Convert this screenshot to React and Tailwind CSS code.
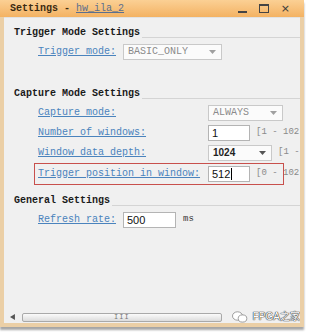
const mono = { fontFamily: '"Liberation Mono", "DejaVu Sans Mono", monospace' };

function Header({ children }) {
  return (
    <div className="flex h-[14px] items-end pl-[10px]">
      <span className="text-[10px] font-bold leading-[14px] text-[#1a1a1a]" style={mono}>
        {children}
      </span>
      <div className="mb-[2px] ml-[2px] h-px flex-1 bg-[#d4d4d4]" />
    </div>
  );
}

function Label({ children, w }) {
  return (
    <span
      className={`shrink-0 text-[10px] leading-[14px] text-[#4a83bd] underline ${w}`}
      style={mono}
    >
      {children}
    </span>
  );
}

function Combo({ value, w, dim }) {
  return (
    <div
      className={`flex h-[16px] shrink-0 items-center justify-between border border-[#c9c9c9] bg-[#fbfbfb] pl-[4px] pr-[5px] ${w}`}
    >
      <span
        className={`text-[10px] leading-none ${dim ? 'text-[#8a8a8a]' : 'font-bold text-[#222]'}`}
        style={dim ? mono : { fontFamily: '"Liberation Sans", Arial, sans-serif' }}
      >
        {value}
      </span>
      <svg width="7" height="4" viewBox="0 0 7 4">
        <path d="M0 0h7L3.5 4z" fill={dim ? '#a0a0a0' : '#555'} />
      </svg>
    </div>
  );
}

function Field({ value, w, cursor }) {
  return (
    <div className={`flex h-[16px] shrink-0 items-center border border-[#b4b4b4] bg-white pl-[3px] ${w}`}>
      <span
        className="text-[11px] leading-none text-[#111]"
        style={{ fontFamily: '"Liberation Sans", Arial, sans-serif' }}
      >
        {value}
      </span>
      {cursor && <span className="ml-px h-[12px] w-px bg-black" />}
    </div>
  );
}

function Range({ children }) {
  return (
    <span className="ml-[6px] shrink-0 whitespace-nowrap text-[9px] text-[#8a8a8a]" style={mono}>
      {children}
    </span>
  );
}

export default function App() {
  return (
    <div className="h-[334px] w-[310px] overflow-hidden bg-white">
      <div className="flex h-[327px] w-[304px] flex-col border-x-4 border-b-4 border-[#ebcfa6] bg-[#f0f0f0] shadow-[0_3px_2px_rgba(0,0,0,0.35)]">
        {/* title bar */}
        <div className="-mx-[4px] flex h-[17px] shrink-0 items-center bg-gradient-to-b from-[#fbd094] to-[#f3b262] pl-[10px] pr-[14px]">
          <span className="text-[10px] font-bold text-[#3a2a12]" style={mono}>
            Settings - <span className="font-normal text-[#5a6f8f] underline">hw_ila_2</span>
          </span>
          <div className="ml-auto flex items-center gap-[12px] text-[#3a3a3a]">
            <div className="mt-[6px] h-[2px] w-[9px] bg-[#444]" />
            <div className="h-[9px] w-[10px] border-[1.5px] border-t-2 border-[#444]" />
            <span className="text-[11px] leading-none" style={{ fontFamily: '"DejaVu Sans", sans-serif' }}>
              ×
            </span>
          </div>
        </div>

        <div className="flex min-h-0 flex-1 flex-col overflow-hidden border-t border-[#e2e2e2] pt-[8px]">
          <Header>Trigger Mode Settings</Header>
          <div className="mt-[2px] flex h-[20px] items-center pl-[34px]">
            <Label w="w-[85px]">Trigger mode:</Label>
            <Combo value="BASIC_ONLY" w="w-[99px]" dim />
          </div>

          <div className="mt-[25px]">
            <Header>Capture Mode Settings</Header>
          </div>
          <div className="mt-[2px] flex h-[20px] items-center pl-[34px]">
            <Label w="w-[170px]">Capture mode:</Label>
            <Combo value="ALWAYS" w="w-[75px]" dim />
          </div>
          <div className="flex h-[20px] items-center pl-[34px]">
            <Label w="w-[170px]">Number of windows:</Label>
            <Field value="1" w="w-[42px]" />
            <Range>[1 - 102</Range>
          </div>
          <div className="flex h-[20px] items-center pl-[34px]">
            <Label w="w-[170px]">Window data depth:</Label>
            <Combo value="1024" w="w-[64px]" />
            <Range>[1 -</Range>
          </div>
          <div className="relative flex h-[22px] items-center pl-[34px]">
            <Label w="w-[170px]">Trigger position in window:</Label>
            <Field value="512" w="w-[42px]" cursor />
            <Range>[0 - 102</Range>
            <div className="pointer-events-none absolute inset-y-0 left-[30px] w-[250px] border border-[#c8504c]" />
          </div>

          <div className="mt-[9px]">
            <Header>General Settings</Header>
          </div>
          <div className="mt-[2px] flex h-[20px] items-center pl-[34px]">
            <Label w="w-[85px]">Refresh rate:</Label>
            <Field value="500" w="w-[53px]" />
            <span className="ml-[7px] text-[9px] text-[#333]" style={mono}>
              ms
            </span>
          </div>

          <div className="flex-1" />

          {/* horizontal scrollbar */}
          <div className="mb-[1px] flex h-[10px] shrink-0 items-center pl-[6px]">
            <svg width="5" height="6" viewBox="0 0 5 6">
              <path d="M0 3L5 0v6z" fill="#555" />
            </svg>
            <div className="ml-[7px] flex h-[9px] w-[202px] items-center justify-center rounded-[2px] border border-[#a9a9a9] bg-gradient-to-b from-[#fbfbfb] to-[#dcdcdc]">
              <span className="text-[7px] leading-none tracking-[1px] text-[#777]" style={mono}>
                III
              </span>
            </div>
            <div className="ml-[10px] flex items-center gap-[5px]">
              <svg width="16" height="12" viewBox="0 0 16 12">
                <ellipse cx="5.5" cy="5" rx="5" ry="4.2" fill="#fff" stroke="#888" strokeWidth="0.8" />
                <ellipse cx="10.5" cy="7.5" rx="4.3" ry="3.6" fill="#fff" stroke="#888" strokeWidth="0.8" />
              </svg>
              <span
                className="whitespace-nowrap text-[10px] leading-none text-white"
                style={{
                  fontFamily: '"Liberation Sans", "Noto Sans CJK SC", sans-serif',
                  textShadow: '0 0 1px #333, 0 0 1px #333, 0 0 1px #333',
                }}
              >
                FPGA之家
              </span>
            </div>
          </div>
        </div>
      </div>
    </div>
  );
}
